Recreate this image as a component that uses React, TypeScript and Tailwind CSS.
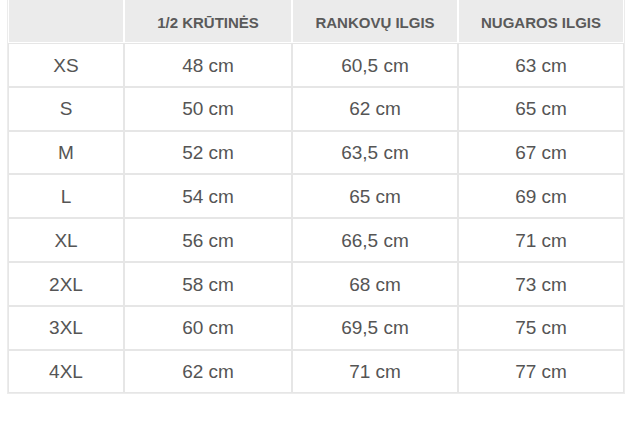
import React from "react";

const rows: [string, string, string, string][] = [
  ["XS", "48 cm", "60,5 cm", "63 cm"],
  ["S", "50 cm", "62 cm", "65 cm"],
  ["M", "52 cm", "63,5 cm", "67 cm"],
  ["L", "54 cm", "65 cm", "69 cm"],
  ["XL", "56 cm", "66,5 cm", "71 cm"],
  ["2XL", "58 cm", "68 cm", "73 cm"],
  ["3XL", "60 cm", "69,5 cm", "75 cm"],
  ["4XL", "62 cm", "71 cm", "77 cm"],
];

export default function App() {
  return (
    <div className="w-[633px] h-[434px] bg-white font-['Liberation_Sans',Arial,sans-serif] text-[#555]">
      <table className="ml-[7px] w-[616px] table-fixed border-separate border-spacing-0 border-l border-r border-b border-[#ececec]">
        <colgroup>
          <col className="w-[116px]" />
          <col className="w-[168px]" />
          <col className="w-[166px]" />
          <col className="w-[166px]" />
        </colgroup>
        <thead>
          <tr className="h-[43px]">
            <th className="bg-[#ebebeb] border border-white border-t-0"></th>
            <th className="bg-[#ebebeb] border border-white border-t-0 pt-[5px] text-[15px] font-bold text-[#5a5a5a] text-center">1/2 KRŪTINĖS</th>
            <th className="bg-[#ebebeb] border border-white border-t-0 pt-[5px] text-[15px] font-bold text-[#5a5a5a] text-center">RANKOVŲ ILGIS</th>
            <th className="bg-[#ebebeb] border border-white border-t-0 pt-[5px] text-[15px] font-bold text-[#5a5a5a] text-center">NUGAROS ILGIS</th>
          </tr>
        </thead>
        <tbody>
          {rows.map((r) => (
            <tr key={r[0]} className="h-[43.8px]">
              {r.map((c, i) => (
                <td key={i} className="border border-[#e6e6e6] text-center text-[19px] pt-[2px] px-0 pb-0">
                  {c}
                </td>
              ))}
            </tr>
          ))}
        </tbody>
      </table>
    </div>
  );
}
